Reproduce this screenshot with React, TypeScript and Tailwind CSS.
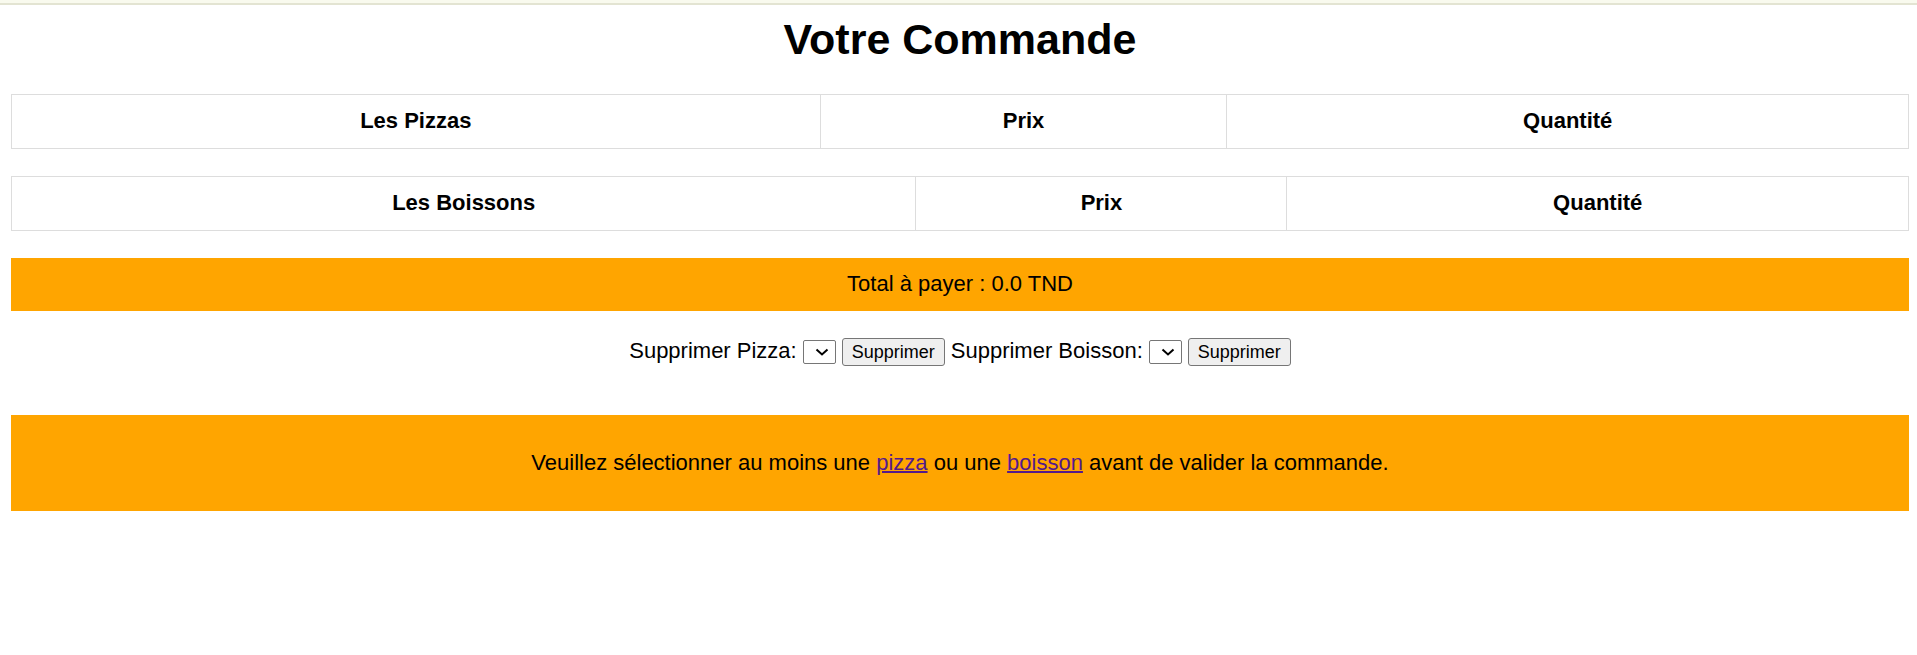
type OrderTableProps = { label: string };

function OrderTable({ label }: OrderTableProps) {
  return (
    <table className="mb-[27px] w-full border-collapse text-center">
      <thead>
        <tr>
          {[label, 'Prix', 'Quantité'].map((heading) => (
            <th key={heading} scope="col" className="border border-[#ddd] px-[14px] pt-[13px] pb-[15px] font-bold">
              {heading}
            </th>
          ))}
        </tr>
      </thead>
    </table>
  );
}

type RemoveFormProps = { id: string; label: string };

function RemoveForm({ id, label }: RemoveFormProps) {
  return (
    <form className="flex items-center gap-[6px]" onSubmit={(e) => e.preventDefault()}>
      <label htmlFor={id}>{label}</label>
      <span className="mt-[3px] grid items-center">
        <select
          id={id}
          className="col-start-1 row-start-1 h-6 w-[33px] appearance-none rounded-[2px] border border-[#767676] bg-white"
        />
        <svg
          aria-hidden="true"
          viewBox="0 0 14 9"
          className="pointer-events-none col-start-1 row-start-1 mr-[7px] h-[9px] w-[14px] justify-self-end"
        >
          <path d="M1.5 1.5 7 6.5l5.5-5" fill="none" stroke="#000" strokeWidth="2" />
        </svg>
      </span>
      <button
        type="submit"
        className="mt-[3px] h-7 rounded-[3px] border border-[#767676] bg-[#efefef] px-[9px] text-[18px] leading-[20px]"
      >
        Supprimer
      </button>
    </form>
  );
}

export default function App() {
  return (
    <div className="min-h-screen bg-white font-['Liberation_Sans',Arial,sans-serif] text-[22px] leading-[25px] text-black">
      <div className="h-[5px] border-b-2 border-[#e3e4d2] bg-[#f9faee]" />
      <main className="pr-2 pl-[11px]">
        <h1 className="mt-[10px] mb-[30px] text-center text-[43px] leading-[49px] font-bold">Votre Commande</h1>
        <OrderTable label="Les Pizzas" />
        <OrderTable label="Les Boissons" />
        <div className="bg-[orange] px-[14px] pt-[13px] pb-[15px] text-center">Total à payer : 0.0 TND</div>
        <div className="mt-6 flex flex-wrap justify-center gap-[6px]">
          <RemoveForm id="pizza" label="Supprimer Pizza:" />
          <RemoveForm id="boisson" label="Supprimer Boisson:" />
        </div>
        <div className="mt-[49px] bg-[orange] px-[14px] pt-[35px] pb-9 text-center">
          <p>
            Veuillez sélectionner au moins une{' '}
            <a href="#pizza" className="text-[#551a8b] underline decoration-2">pizza</a> ou une{' '}
            <a href="#boisson" className="text-[#551a8b] underline decoration-2">boisson</a> avant de valider la commande.
          </p>
        </div>
      </main>
    </div>
  );
}
